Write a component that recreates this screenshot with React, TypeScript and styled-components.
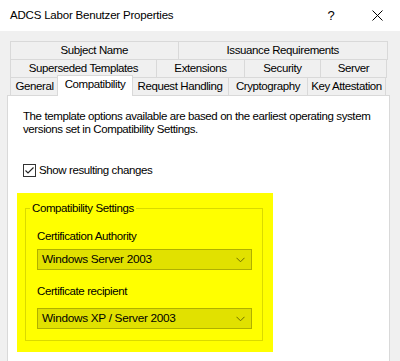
import React from "react";
import styled, { createGlobalStyle } from "styled-components";

interface TabDef {
  label: string;
  width: number;
  selected?: boolean;
}

const tabRows: TabDef[][] = [
  [
    { label: "Subject Name", width: 169 },
    { label: "Issuance Requirements", width: 211 },
  ],
  [
    { label: "Superseded Templates", width: 147 },
    { label: "Extensions", width: 89 },
    { label: "Security", width: 77 },
    { label: "Server", width: 67 },
  ],
  [
    { label: "General", width: 49 },
    { label: "Compatibility", width: 76, selected: true },
    { label: "Request Handling", width: 98 },
    { label: "Cryptography", width: 80 },
    { label: "Key Attestation", width: 79 },
  ],
];

const GlobalStyle = createGlobalStyle`
  html, body {
    margin: 0;
    padding: 0;
    background: #f0f0f0;
  }
  body {
    font-family: "Liberation Sans", Arial, sans-serif;
    font-size: 11.5px;
    letter-spacing: -0.4px;
    color: #000;
  }
`;

const Window = styled.div`
  width: 400px;
  height: 361px;
  display: flex;
  flex-direction: column;
  background: #f0f0f0;
  overflow: hidden;
`;

const TitleBar = styled.div`
  height: 31px;
  flex: none;
  display: flex;
  align-items: center;
  background: #fff;
  padding-left: 10px;
`;

const Title = styled.div`
  flex: 1;
  padding-bottom: 1px;
  letter-spacing: -0.2px;
`;

const TitleButton = styled.div<{ $w: number }>`
  width: ${(p) => p.$w}px;
  height: 31px;
  display: flex;
  align-items: center;
  justify-content: center;
  font-size: 13px;
`;

const Body = styled.div`
  flex: 1;
  display: flex;
  flex-direction: column;
  padding: 10px 10px 0 7px;
`;

const TabRow = styled.div`
  display: flex;
  margin: 0 2px 0 3px;
  & + & {
    margin-top: -1px;
  }
`;

const Tab = styled.div<{ $w: number; $selected?: boolean }>`
  box-sizing: border-box;
  width: ${(p) => p.$w}px;
  height: ${(p) => (p.$selected ? 21 : 19)}px;
  margin-top: ${(p) => (p.$selected ? -2 : 0)}px;
  margin-left: ${(p) => (p.$selected ? -2 : -1)}px;
  margin-right: ${(p) => (p.$selected ? -1 : 0)}px;
  &:first-child {
    margin-left: 0;
  }
  border: 1px solid #d9d9d9;
  border-bottom: ${(p) => (p.$selected ? "none" : "1px solid #d9d9d9")};
  background: ${(p) => (p.$selected ? "#fff" : "#f0f0f0")};
  position: relative;
  z-index: ${(p) => (p.$selected ? 2 : 0)};
  text-align: center;
  line-height: 16px;
  white-space: nowrap;
`;

const Panel = styled.div`
  flex: 1;
  margin-top: -1px;
  background: #fff;
  border: 1px solid #d9d9d9;
  border-bottom: none;
  padding: 14px 10px 0 15px;
`;

const Description = styled.p`
  margin: 0;
  line-height: 13px;
  white-space: nowrap;
`;

const CheckRow = styled.label`
  display: flex;
  align-items: center;
  gap: 3px;
  margin-top: 27px;
  line-height: 15px;
`;

const Highlight = styled.div`
  width: 256px;
  box-sizing: border-box;
  margin: 15px 0 0 -6px;
  background: #ffff00;
  padding: 8px 10px 11px 8px;
`;

const GroupBox = styled.fieldset`
  margin: 0;
  padding: 0 10px 11px 11px;
  border: 1px solid #dada00;
`;

const Legend = styled.legend`
  padding: 0 2px;
  margin-left: -7px;
  line-height: 15px;
`;

const FieldLabel = styled.div<{ $top: number }>`
  margin-top: ${(p) => p.$top}px;
  line-height: 15px;
`;

const Select = styled.div<{ $top: number }>`
  box-sizing: border-box;
  margin-top: ${(p) => p.$top}px;
  width: 215px;
  height: 21px;
  border: 1px solid #b0b000;
  background: #e1e100;
  display: flex;
  align-items: center;
  justify-content: space-between;
  padding: 0 6px 0 4px;
  font-size: 11.8px;
  letter-spacing: -0.3px;
  line-height: 15px;
`;

const Chevron = () => (
  <svg width="9" height="6" viewBox="0 0 9 6">
    <path d="M0.5 0.8 L4.5 4.8 L8.5 0.8" fill="none" stroke="#6e6e00" strokeWidth="1" />
  </svg>
);

const CheckBox = () => (
  <svg width="13" height="13" viewBox="0 0 13 13">
    <rect x="0.5" y="0.5" width="12" height="12" fill="#fff" stroke="#333" />
    <path d="M2.5 6.5 L5 9 L10.5 3.5" fill="none" stroke="#222" strokeWidth="1.1" />
  </svg>
);

const CloseIcon = () => (
  <svg width="11" height="11" viewBox="0 0 11 11">
    <path d="M0.5 0.5 L10.5 10.5 M10.5 0.5 L0.5 10.5" stroke="#000" strokeWidth="1" />
  </svg>
);

export default function App() {
  return (
    <Window>
      <GlobalStyle />
      <TitleBar>
        <Title>ADCS Labor Benutzer Properties</Title>
        <TitleButton $w={46}>?</TitleButton>
        <TitleButton $w={46}>
          <CloseIcon />
        </TitleButton>
      </TitleBar>
      <Body>
        {tabRows.map((row, i) => (
          <TabRow key={i}>
            {row.map((t) => (
              <Tab key={t.label} $w={t.width} $selected={t.selected}>
                {t.label}
              </Tab>
            ))}
          </TabRow>
        ))}
        <Panel>
          <Description>
            The template options available are based on the earliest operating system
            <br />
            versions set in Compatibility Settings.
          </Description>
          <CheckRow>
            <CheckBox />
            Show resulting changes
          </CheckRow>
          <Highlight>
            <GroupBox>
              <Legend>Compatibility Settings</Legend>
              <FieldLabel $top={13}>Certification Authority</FieldLabel>
              <Select $top={5}>
                Windows Server 2003
                <Chevron />
              </Select>
              <FieldLabel $top={14}>Certificate recipient</FieldLabel>
              <Select $top={9}>
                Windows XP / Server 2003
                <Chevron />
              </Select>
            </GroupBox>
          </Highlight>
        </Panel>
      </Body>
    </Window>
  );
}
